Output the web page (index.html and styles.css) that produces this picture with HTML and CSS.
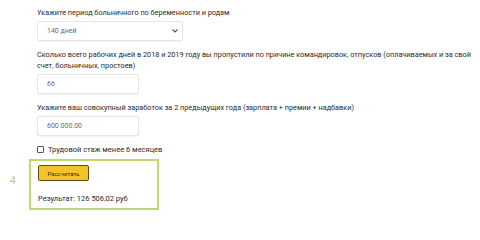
FILE: index.html
```html
<!DOCTYPE html>
<html lang="ru">
<head>
<meta charset="utf-8">
<link rel="stylesheet" href="styles.css">
</head>
<body>
<div class="form">
  <div class="label first">Укажите период больничного по беременности и родам</div>
  <div class="select">
    <span>140 дней</span>
    <svg class="arrow" width="6" height="4" viewBox="0 0 6 4"><path d="M0.5 0.5 L3 3 L5.5 0.5" fill="none" stroke="#555" stroke-width="1.1"/></svg>
  </div>
  <div class="label">Сколько всего рабочих дней в 2018 и 2019 году вы пропустили по причине командировок, отпусков (оплачиваемых и за свой счет, больничных, простоев)</div>
  <div class="input">66</div>
  <div class="label">Укажите ваш совокупный заработок за 2 предыдущих года (зарплата + премии + надбавки)</div>
  <div class="input">600 000.00</div>
  <label class="check"><span class="box"></span>Трудовой стаж менее 6 месяцев</label>
  <div class="step">
    <div class="num">4</div>
    <div class="frame">
      <div class="btn">Рассчитать</div>
      <div class="result">Результат: 126 506,02 руб</div>
    </div>
  </div>
</div>
</body>
</html>
```
FILE: styles.css
```css
html, body {
  margin: 0;
  padding: 0;
  background: #ffffff;
}
body {
  font-family: Roboto, "Liberation Sans", sans-serif;
  font-size: 7.3px;
  line-height: 11px;
  color: #2b2b2b;
}
.form {
  padding: 6px 0 0 37px;
}
.label {
  margin-top: 8px;
}
.label.first {
  margin-top: 1px;
}
.select, .input {
  box-sizing: border-box;
  height: 20px;
  margin-top: 3px;
  border: 1px solid #e6e6e6;
  border-radius: 2px;
  box-shadow: 0 1px 1px rgba(0,0,0,0.05);
  display: flex;
  align-items: center;
  padding-left: 9px;
  color: #6a6a6a;
  font-size: 7px;
}
.select {
  width: 146px;
  justify-content: space-between;
  padding-right: 4px;
}
.input {
  width: 102px;
}
.check {
  display: flex;
  align-items: center;
  margin-top: 8px;
  font-size: 7.5px;
}
.check .box {
  width: 5px;
  height: 5px;
  border: 1px solid #555;
  border-radius: 1px;
  margin-right: 4px;
}
.step {
  display: flex;
  align-items: flex-start;
  margin-left: -37px;
  margin-top: 4px;
}
.num {
  width: 29px;
  padding-top: 16px;
  padding-left: 10px;
  box-sizing: border-box;
  color: #b7cf5c;
  font-size: 10px;
}
.frame {
  box-sizing: border-box;
  width: 130px;
  height: 51px;
  border: 2px solid #bcd86e;
  padding: 4px 0 0 7px;
}
.btn {
  box-sizing: border-box;
  width: 51px;
  height: 16px;
  background: #f4c22a;
  border: 1px solid #5d4c1c;
  border-radius: 2px;
  display: flex;
  align-items: center;
  justify-content: center;
  font-size: 6px;
  color: #3a3000;
}
.result {
  margin-top: 12px;
  font-size: 7.5px;
}
```
